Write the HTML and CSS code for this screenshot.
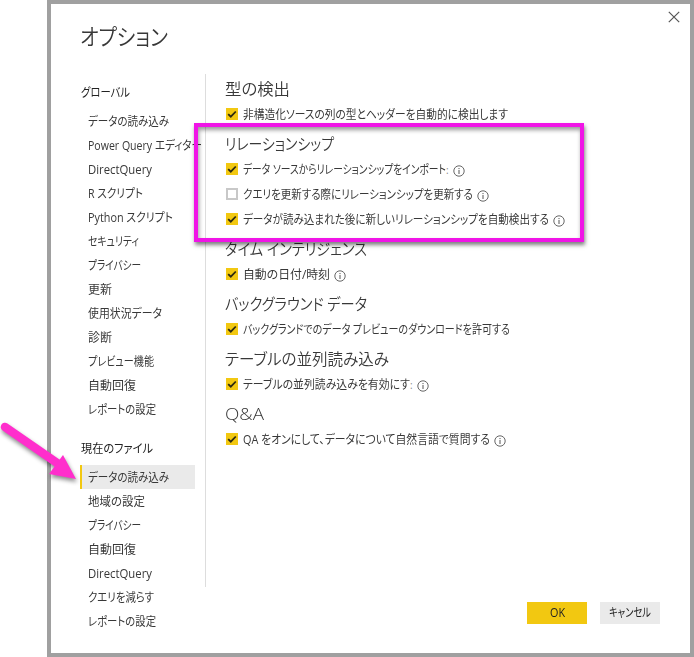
FILE: index.html
```html
<!DOCTYPE html>
<html lang="ja">
<head>
<meta charset="utf-8">
<title>オプション</title>
<link rel="stylesheet" href="styles.css">
</head>
<body>
<svg class="defs" width="0" height="0" aria-hidden="true">
  <symbol id="check" viewBox="0 0 12 12"><path d="M2.2 6.1 4.8 8.7 9.8 3.5" fill="none" stroke="#2d2910" stroke-width="1.8"/></symbol>
  <symbol id="info" viewBox="0 0 12 12"><circle cx="6" cy="6" r="5.2" fill="none" stroke="#555" stroke-width=".9"/><path d="M6 5v4M6 3v1.1" stroke="#555" stroke-width="1"/></symbol>
</svg>
<main class="dialog">
  <svg class="close" viewBox="0 0 12 12"><path d="M.8.8 11.2 11.2M11.2.8.8 11.2" stroke="#555" stroke-width="1.2"/></svg>
  <h1 class="title"><span data-w="88">オプション</span></h1>
  <div class="body">
    <nav class="side">
      <h2 class="group"><span data-w="49">グローバル</span></h2>
      <ul class="list">
        <li><span data-w="81">データの読み込み</span></li>
        <li><span data-w="114">Power Query エディター</span></li>
        <li><span data-w="64">DirectQuery</span></li>
        <li><span data-w="55">R スクリプト</span></li>
        <li><span data-w="85">Python スクリプト</span></li>
        <li><span data-w="51">セキュリティ</span></li>
        <li><span data-w="53">プライバシー</span></li>
        <li><span data-w="24">更新</span></li>
        <li><span data-w="74">使用状況データ</span></li>
        <li><span data-w="24">診断</span></li>
        <li><span data-w="66">プレビュー機能</span></li>
        <li><span data-w="48">自動回復</span></li>
        <li><span data-w="68">レポートの設定</span></li>
      </ul>
      <h2 class="group second"><span data-w="72">現在のファイル</span></h2>
      <ul class="list">
        <li class="selected"><span data-w="81">データの読み込み</span></li>
        <li><span data-w="57">地域の設定</span></li>
        <li><span data-w="53">プライバシー</span></li>
        <li><span data-w="48">自動回復</span></li>
        <li><span data-w="64">DirectQuery</span></li>
        <li><span data-w="66">クエリを減らす</span></li>
        <li><span data-w="68">レポートの設定</span></li>
      </ul>
    </nav>
    <div class="panel">
      <section>
        <h3><span data-w="65">型の検出</span></h3>
        <div class="option"><svg class="box on"><use href="#check"/></svg><span data-w="265">非構造化ソースの列の型とヘッダーを自動的に検出します</span></div>
      </section>
      <section>
        <h3><span data-w="109">リレーションシップ</span></h3>
        <div class="option"><svg class="box on"><use href="#check"/></svg><span data-w="203">データ ソースからリレーションシップをインポート</span><i class="mark">:</i><svg class="info"><use href="#info"/></svg></div>
        <div class="option"><svg class="box"></svg><span data-w="230">クエリを更新する際にリレーションシップを更新する</span><svg class="info"><use href="#info"/></svg></div>
        <div class="option"><svg class="box on"><use href="#check"/></svg><span data-w="306">データが読み込まれた後に新しいリレーションシップを自動検出する</span><svg class="info"><use href="#info"/></svg></div>
      </section>
      <section>
        <h3><span data-w="142">タイム インテリジェンス</span></h3>
        <div class="option"><svg class="box on"><use href="#check"/></svg><span data-w="87">自動の日付/時刻</span><svg class="info"><use href="#info"/></svg></div>
      </section>
      <section>
        <h3><span data-w="142">バックグラウンド データ</span></h3>
        <div class="option"><svg class="box on"><use href="#check"/></svg><span data-w="267">バックグランドでのデータ プレビューのダウンロードを許可する</span></div>
      </section>
      <section>
        <h3><span data-w="164">テーブルの並列読み込み</span></h3>
        <div class="option"><svg class="box on"><use href="#check"/></svg><span data-w="167">テーブルの並列読み込みを有効にす</span><i class="mark">:</i><svg class="info"><use href="#info"/></svg></div>
      </section>
      <section>
        <h3><span data-w="39">Q&amp;A</span></h3>
        <div class="option"><svg class="box on"><use href="#check"/></svg><span data-w="247">QA をオンにして、データについて自然言語で質問する</span><svg class="info"><use href="#info"/></svg></div>
      </section>
    </div>
  </div>
  <footer class="actions">
    <button class="primary"><span data-w="15">OK</span></button>
    <button><span data-w="42">キャンセル</span></button>
  </footer>
</main>
<div class="highlight"></div>
<svg class="arrow" viewBox="0 0 90 75"><path d="M5 10 60 48" stroke="#ff2ecc" stroke-width="8.5" stroke-linecap="round"/><path d="M63 38 76 62 49 57Z" fill="#ff2ecc"/></svg>
<script src="fit.js"></script>
</body>
</html>
```
FILE: styles.css
```css
* { box-sizing: border-box; }
body {
  margin: 0;
  background: #fff;
  color: #383838;
  font: 12px/24px "Open Sans", "Noto Sans CJK JP", sans-serif;
  font-feature-settings: "palt";
  overflow: hidden;
}
.defs { position: absolute; }
.dialog {
  display: flex;
  flex-direction: column;
  width: 647px;
  height: 657px;
  margin-left: 47px;
  padding: 0 30px 0 29px;
  border: 4px solid #a0a0a0;
}
.close { position: absolute; left: 668px; top: 11px; width: 12px; height: 12px; }
h1, h2, h3, ul { margin: 0; padding: 0; font-weight: 400; list-style: none; }
.title { height: 70px; padding-top: 15px; font-size: 23px; line-height: 34px; font-weight: 350; }
[data-w] { display: inline-block; flex: none; white-space: nowrap; transform-origin: left center; }
.body { display: flex; height: 560px; }
.side { width: 115px; flex: none; }
.group { height: 35px; padding: 7px 0 0 1px; font-size: 12px; line-height: 24px; color: #222; }
.second { height: 44px; padding-top: 16px; }
.list li { height: 24px; padding: 1px 0 0 8px; white-space: nowrap; }
.list .selected { padding-left: 6px; border-left: 2px solid #f2c811; background: #eaeaea; }
.panel { width: 400px; height: 513px; margin-left: 10px; padding: 2px 0 0 19px; border-left: 1px solid #ddd; }
section { margin-bottom: 4px; }
h3 { height: 26px; font-size: 16px; line-height: 26px; font-weight: 350; }
.option { display: flex; align-items: center; height: 25px; padding-left: 1px; }
.box { flex: none; width: 12px; height: 12px; margin: 0 5px 1px 0; border: 2px solid #c8c8c8; }
.box.on { border: 0; background: #f2c811; }
.info { flex: none; width: 12px; height: 12px; margin: 2px 0 0 4px; }
.mark { width: 3px; font-style: normal; font-size: 10px; color: #888; }
.actions { display: flex; justify-content: flex-end; gap: 13px; margin-top: -32px; }
button { width: 60px; height: 22px; padding: 0; border: 0; background: #eaeaea; color: #222; font: 12px/22px "Open Sans", "Noto Sans CJK JP", sans-serif; font-feature-settings: "palt"; }
.primary { background: #f2c811; }
.highlight {
  position: absolute;
  left: 194px;
  top: 123px;
  width: 390px;
  height: 119px;
  border: 4px solid #f014e6;
  box-shadow: 1px 3px 4px rgba(0,0,0,.5), inset 1px 3px 4px rgba(0,0,0,.4);
}
.arrow { position: absolute; left: 0; top: 417px; width: 90px; height: 75px; fill: none; filter: drop-shadow(1px 3px 2px rgba(0,0,0,.45)); }
```
FILE: fit.js
```js
document.querySelectorAll('[data-w]').forEach(function (el) {
  var target = Number(el.dataset.w);
  var natural = el.getBoundingClientRect().width;
  el.style.transform = 'scaleX(' + target / natural + ')';
  el.style.width = natural + 'px';
  el.style.marginRight = (target - natural) + 'px';
});
```
